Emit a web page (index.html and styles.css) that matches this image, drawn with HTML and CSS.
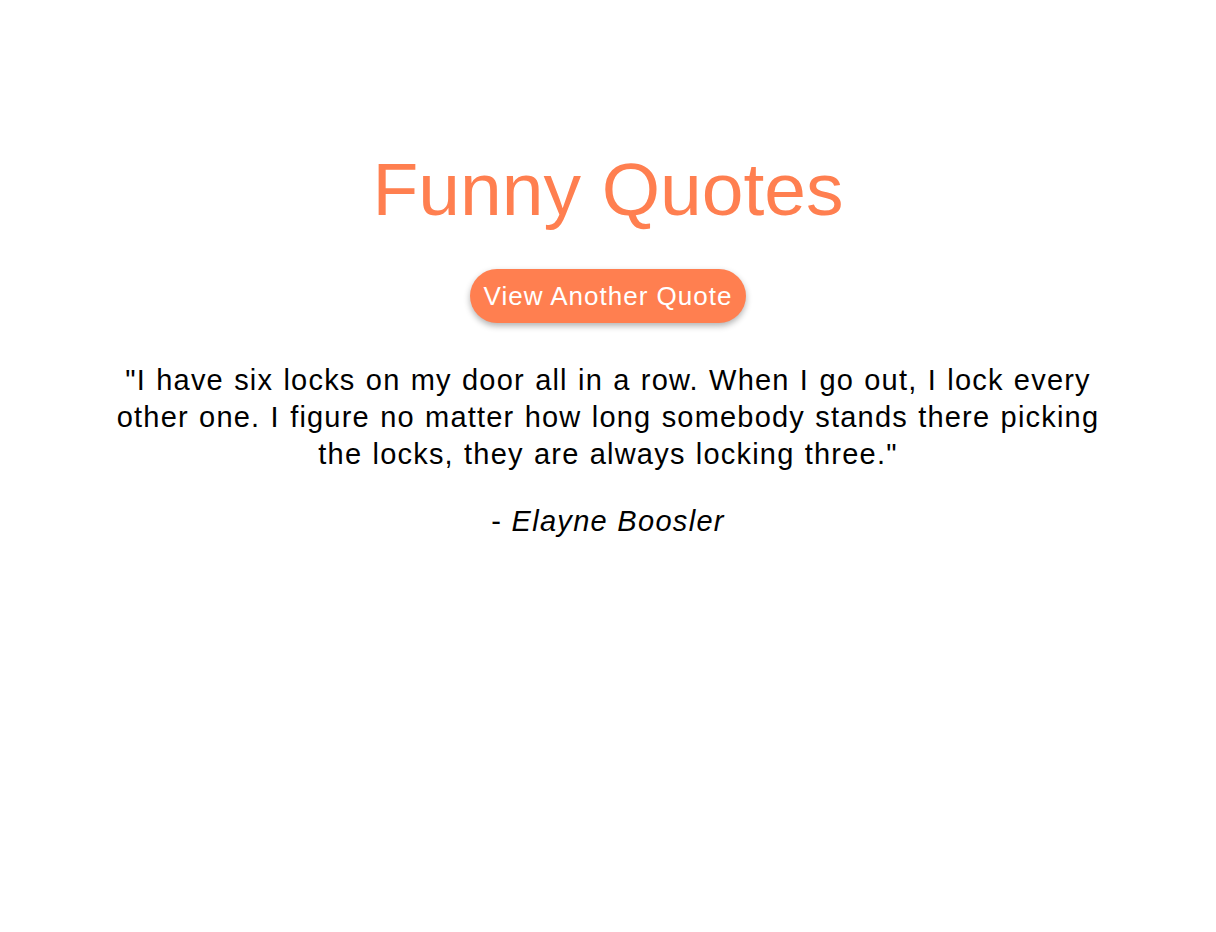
FILE: index.html
```html
<!DOCTYPE html>
<html lang="en">
<head>
<meta charset="utf-8">
<title>Funny Quotes</title>
<link rel="stylesheet" href="styles.css">
</head>
<body>
<main class="page">
  <h1 class="title">Funny Quotes</h1>
  <button class="btn" type="button">View Another Quote</button>
  <div class="quote-box">
    <p class="quote">"I have six locks on my door all in a row. When I go out, I lock every other one. I figure no matter how long somebody stands there picking the locks, they are always locking three."</p>
    <p class="author">- <em>Elayne Boosler</em></p>
  </div>
</main>
</body>
</html>
```
FILE: styles.css
```css
html, body {
  margin: 0;
  padding: 0;
  background: #ffffff;
}
body {
  font-family: "Liberation Sans", Arial, sans-serif;
  color: #000;
}
.page {
  display: flex;
  flex-direction: column;
  align-items: center;
  padding-top: 147px;
  text-align: center;
}
.title {
  margin: 0;
  font-size: 75px;
  line-height: 84px;
  font-weight: normal;
  color: #ff7f50;
}
.btn {
  margin-top: 38px;
  height: 54px;
  padding: 0 14px;
  border: none;
  border-radius: 27px;
  background: #ff7f50;
  color: #ffffff;
  font-family: "Liberation Sans", Arial, sans-serif;
  font-size: 26px;
  letter-spacing: 1px;
  box-shadow: 0 3px 6px rgba(0, 0, 0, 0.3);
}
.quote-box {
  margin-top: 39px;
  width: 1010px;
}
.quote {
  margin: 0;
  font-size: 29px;
  letter-spacing: 1.2px;
  word-spacing: 1px;
  line-height: 37px;
}
.author {
  margin: 30px 0 0;
  font-size: 29px;
  letter-spacing: 1.3px;
  line-height: 37px;
}
```
